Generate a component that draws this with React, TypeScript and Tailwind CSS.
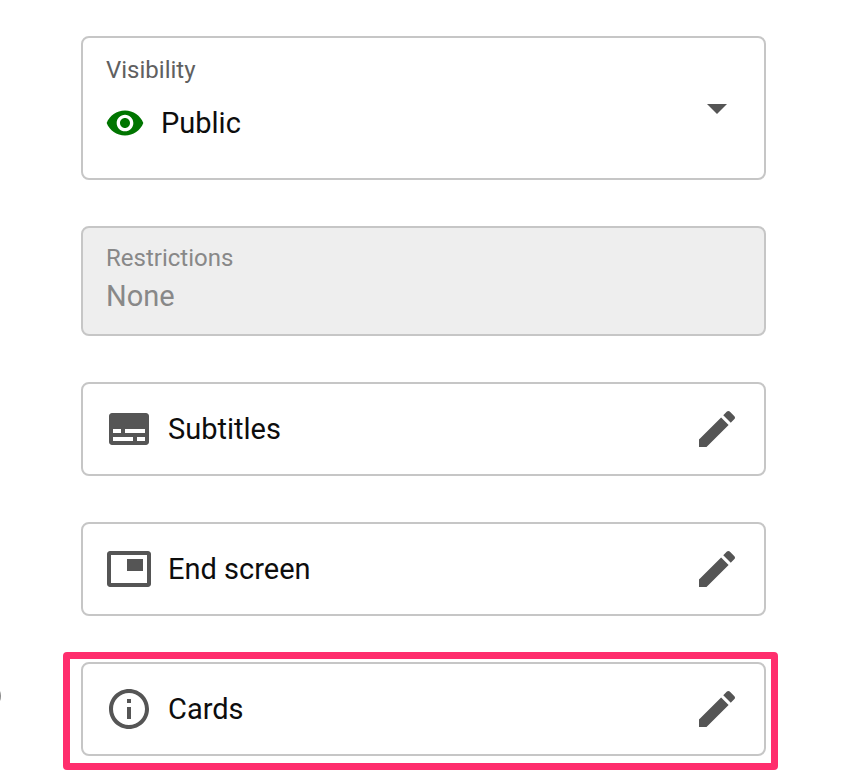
import React, { useState } from 'react';

const icons = {
  eye: 'M12 4.5C7 4.5 2.73 7.61 1 12c1.73 4.39 6 7.5 11 7.5s9.27-3.11 11-7.5c-1.73-4.39-6-7.5-11-7.5zM12 17c-2.76 0-5-2.24-5-5s2.24-5 5-5 5 2.24 5 5-2.24 5-5 5zm0-8c-1.66 0-3 1.34-3 3s1.34 3 3 3 3-1.34 3-3-1.34-3-3-3z',
  arrow: 'M7 10l5 5 5-5z',
  pencil:
    'M3 17.25V21h3.75L17.81 9.94l-3.75-3.75L3 17.25zM20.71 7.04c.39-.39.39-1.02 0-1.41l-2.34-2.34c-.39-.39-1.02-.39-1.41 0l-1.83 1.83 3.75 3.75 1.83-1.83z',
  subtitles:
    'M20.5 4h-17C2.7 4 2 4.7 2 5.5v13c0 .8.7 1.5 1.5 1.5h17c.8 0 1.5-.7 1.5-1.5v-13c0-.8-.7-1.5-1.5-1.5zM4 12h4v2H4v-2zm10 6H4v-2h10v2zm6 0h-4v-2h4v2zm0-4H10v-2h10v2z',
  endScreen:
    'M19 7h-8v6h8V7zm2.5-4h-19C1.7 3 1 3.7 1 4.5v15c0 .8.7 1.5 1.5 1.5h19c.8 0 1.5-.7 1.5-1.5v-15c0-.8-.7-1.5-1.5-1.5zM21 19H3V5h18v14z',
  info: 'M11 7h2v2h-2zm0 4h2v6h-2zm1-9C6.48 2 2 6.48 2 12s4.48 10 10 10 10-4.48 10-10S17.52 2 12 2zm0 18c-4.41 0-8-3.59-8-8s3.59-8 8-8 8 3.59 8 8-3.59 8-8 8z',
};

const rows = [
  { id: 'subtitles', title: 'Subtitles', icon: icons.subtitles },
  { id: 'end-screen', title: 'End screen', icon: icons.endScreen },
  { id: 'cards', title: 'Cards', icon: icons.info, highlighted: true },
];

function Icon({ path, className }: { path: string; className: string }) {
  return (
    <svg
      viewBox="0 0 24 24"
      fill="currentColor"
      aria-hidden="true"
      className={`shrink-0 ${className}`}
    >
      <path d={path} />
    </svg>
  );
}

export default function App() {
  const [visibility, setVisibility] = useState('Public');

  return (
    <main className="relative overflow-hidden bg-white px-[81px] pt-9 pb-6 font-[Roboto,sans-serif] text-[29px] text-[#0d0d0d]">
      <form className="flex flex-col gap-[46px]">
        <div className="flex h-36 items-center rounded-lg border-2 border-[#c6c6c6] px-[23px]">
          <div className="flex h-full min-w-0 flex-1 flex-col pt-4">
            <label
              htmlFor="visibility"
              className="text-2xl leading-8 text-[#606060]"
            >
              Visibility
            </label>
            <div className="mt-[17px] -ml-px flex items-center gap-4">
              <Icon path={icons.eye} className="size-10 text-[#007500]" />
              <select
                id="visibility"
                value={visibility}
                onChange={(e) => setVisibility(e.target.value)}
                className="min-w-0 flex-1 appearance-none bg-transparent leading-10 outline-none"
              >
                <option>Public</option>
                <option>Unlisted</option>
                <option>Private</option>
              </select>
            </div>
          </div>
          <Icon path={icons.arrow} className="size-12 text-[#555555]" />
        </div>

        <div className="flex h-[110px] flex-col rounded-lg border-2 border-[#c6c6c6] bg-[#eeeeee] px-[23px] pt-3.5 text-[#888888]">
          <label htmlFor="restrictions" className="text-2xl leading-8">
            Restrictions
          </label>
          <input
            id="restrictions"
            value="None"
            disabled
            readOnly
            className="h-11 w-full bg-transparent"
          />
        </div>

        {rows.map((row) => (
          <div key={row.id} className="relative">
            <button
              type="button"
              className="flex h-[94px] w-full items-center gap-[15px] rounded-lg border-2 border-[#c6c6c6] pr-[23px] pl-[22px] text-left"
            >
              <Icon path={row.icon} className="size-12 text-[#555555]" />
              <span className="flex-1 pt-0.5">{row.title}</span>
              <Icon path={icons.pencil} className="size-12 text-[#555555]" />
            </button>
            {row.highlighted && (
              <>
                <div className="pointer-events-none absolute -top-2.5 -right-3 -bottom-3.5 -left-[18px] rounded border-[7px] border-[#ff2e6d]" />
                <div className="absolute top-[22px] -left-[104px] size-6 rounded-full bg-[#888888]" />
              </>
            )}
          </div>
        ))}
      </form>
    </main>
  );
}
